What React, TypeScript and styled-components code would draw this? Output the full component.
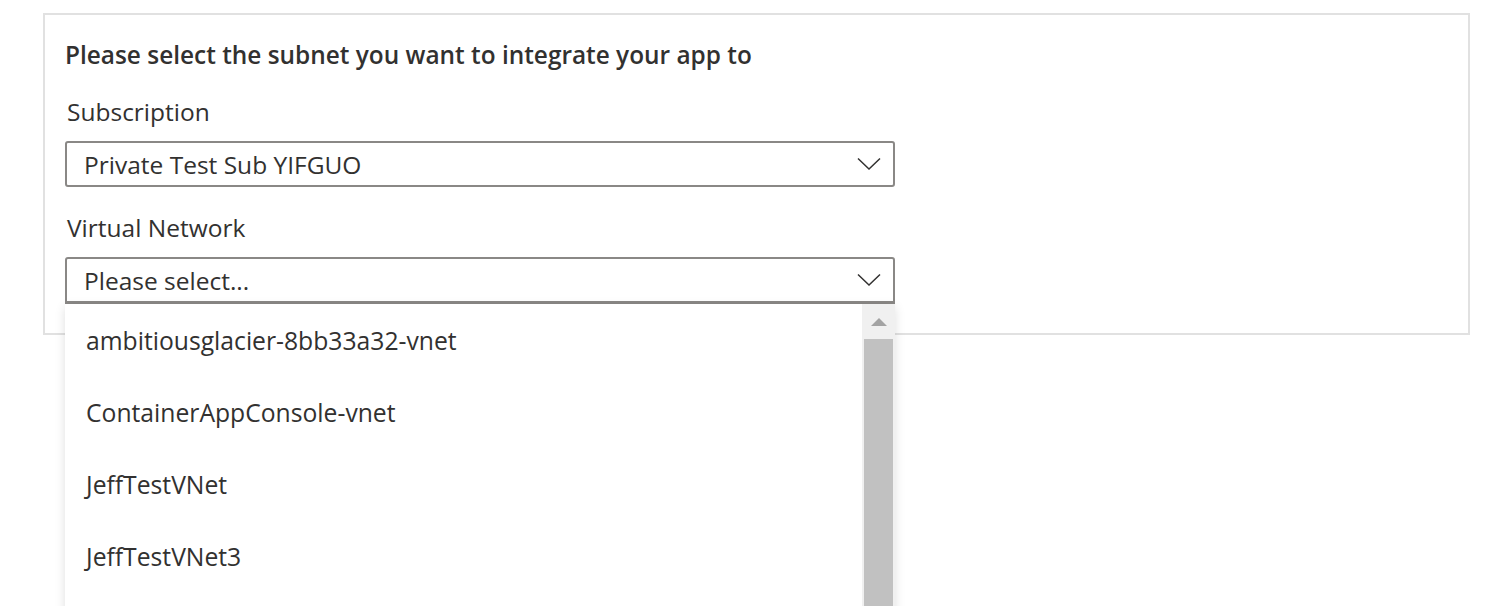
import React, { FC } from 'react'
import styled, { createGlobalStyle } from 'styled-components'

const GlobalStyle = createGlobalStyle`
  html, body {
    margin: 0;
    padding: 0;
    background: #fff;
    font-family: "Open Sans", "Noto Sans", sans-serif;
    color: #323130;
    overflow: hidden;
  }
`

const Page = styled.div`
  width: 1506px;
  height: 606px;
  padding: 13px 0 0 43px;
  box-sizing: border-box;
`

const Card = styled.div`
  width: 1427px;
  height: 322px;
  border: 2px solid #e1e1e1;
  box-sizing: border-box;
  padding: 24px 0 0 20px;
`

const Title = styled.div`
  font-size: 24.4px;
  font-weight: 600;
  line-height: 32px;
  margin-bottom: 25px;
`

const Label = styled.div`
  font-size: 24.5px;
  line-height: 32px;
  padding-left: 2px;
  margin-bottom: 13px;
`

const Field = styled.div`
  position: relative;
  width: 830px;
  margin-bottom: 25px;
`

const SelectBox = styled.div<{ open?: boolean }>`
  height: ${(p) => (p.open ? '47px' : '46px')};
  box-sizing: border-box;
  border: 2px solid #8a8886;
  border-bottom-width: ${(p) => (p.open ? '3px' : '2px')};
  border-radius: ${(p) => (p.open ? '3px 3px 0 0' : '3px')};
  display: flex;
  align-items: center;
  justify-content: space-between;
  padding: 0 12px 0 17px;
  font-size: 24.5px;
`

const Chevron = () => (
  <svg width="24" height="14" viewBox="0 0 24 14" fill="none">
    <path d="M1 1.5 L12 12 L23 1.5" stroke="#323130" strokeWidth="1.5" />
  </svg>
)

const DropList = styled.div`
  position: absolute;
  top: 47px;
  left: 0;
  width: 830px;
  height: 310px;
  background: #fff;
  box-shadow: 0 3px 10px rgba(0, 0, 0, 0.13);
  display: flex;
`

const Options = styled.div`
  flex: 1;
`

const Option = styled.div`
  height: 72px;
  display: flex;
  align-items: center;
  padding-left: 21px;
  font-size: 24.7px;
`

const ScrollTrack = styled.div`
  width: 33px;
  background: #f0f0f0;
  display: flex;
  flex-direction: column;
  align-items: center;
  padding: 0 2px;
  box-sizing: border-box;
`

const ScrollArrow = styled.div`
  height: 35px;
  display: flex;
  align-items: center;
  justify-content: center;
`

const ScrollThumb = styled.div`
  width: 29px;
  flex: 1;
  background: #c1c1c1;
`

const vnets = [
  'ambitiousglacier-8bb33a32-vnet',
  'ContainerAppConsole-vnet',
  'JeffTestVNet',
  'JeffTestVNet3',
]

const App: FC = () => {
  return (
    <Page>
      <GlobalStyle />
      <Card>
        <Title>Please select the subnet you want to integrate your app to</Title>
        <Label>Subscription</Label>
        <Field>
          <SelectBox>
            <span>Private Test Sub YIFGUO</span>
            <Chevron />
          </SelectBox>
        </Field>
        <Label>Virtual Network</Label>
        <Field>
          <SelectBox open>
            <span>Please select...</span>
            <Chevron />
          </SelectBox>
          <DropList>
            <Options>
              {vnets.map((v) => (
                <Option key={v}>{v}</Option>
              ))}
            </Options>
            <ScrollTrack>
              <ScrollArrow>
                <svg width="16" height="9" viewBox="0 0 16 9">
                  <path d="M0 9 L8 1 L16 9 Z" fill="#a3a3a3" />
                </svg>
              </ScrollArrow>
              <ScrollThumb />
            </ScrollTrack>
          </DropList>
        </Field>
      </Card>
    </Page>
  )
}

export default App
